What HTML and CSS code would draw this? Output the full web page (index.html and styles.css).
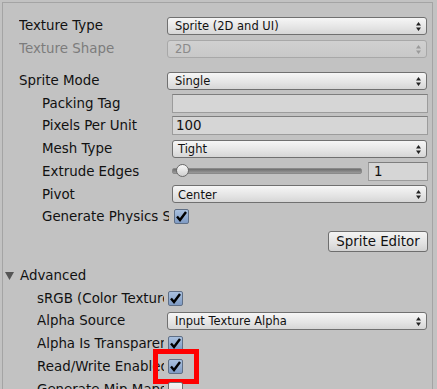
FILE: index.html
```html
<!DOCTYPE html>
<html lang="en">
<head>
    <meta charset="UTF-8">
    <title>Texture Import Settings</title>
    <link rel="stylesheet" href="styles.css">
</head>
<body>
    <div class="inspector">
        <div class="row">
            <span class="label">Texture Type</span>
            <div class="popup"><span>Sprite (2D and UI)</span><svg class="arrows" width="5" height="9" viewBox="0 0 5 9"><path d="M2.5 0 L5 3.5 L0 3.5Z M2.5 9 L5 5.5 L0 5.5Z"/></svg></div>
        </div>
        <div class="row disabled">
            <span class="label">Texture Shape</span>
            <div class="popup"><span>2D</span><svg class="arrows" width="5" height="9" viewBox="0 0 5 9"><path d="M2.5 0 L5 3.5 L0 3.5Z M2.5 9 L5 5.5 L0 5.5Z"/></svg></div>
        </div>

        <div class="row spaced">
            <span class="label">Sprite Mode</span>
            <div class="popup"><span>Single</span><svg class="arrows" width="5" height="9" viewBox="0 0 5 9"><path d="M2.5 0 L5 3.5 L0 3.5Z M2.5 9 L5 5.5 L0 5.5Z"/></svg></div>
        </div>
        <div class="row sub">
            <span class="label">Packing Tag</span>
            <div class="field"></div>
        </div>
        <div class="row sub">
            <span class="label">Pixels Per Unit</span>
            <div class="field">100</div>
        </div>
        <div class="row sub">
            <span class="label">Mesh Type</span>
            <div class="popup"><span>Tight</span><svg class="arrows" width="5" height="9" viewBox="0 0 5 9"><path d="M2.5 0 L5 3.5 L0 3.5Z M2.5 9 L5 5.5 L0 5.5Z"/></svg></div>
        </div>
        <div class="row sub">
            <span class="label">Extrude Edges</span>
            <div class="slider">
                <div class="track"><span class="thumb"></span></div>
                <div class="field number">1</div>
            </div>
        </div>
        <div class="row sub">
            <span class="label">Pivot</span>
            <div class="popup"><span>Center</span><svg class="arrows" width="5" height="9" viewBox="0 0 5 9"><path d="M2.5 0 L5 3.5 L0 3.5Z M2.5 9 L5 5.5 L0 5.5Z"/></svg></div>
        </div>
        <div class="row sub">
            <span class="label">Generate Physics Shape</span>
            <span class="toggle checked nudge"><svg width="15" height="15" viewBox="0 0 15 15"><path d="M3 7.5 L6 11 L12 3" fill="none" stroke="#000" stroke-width="2.4"/></svg></span>
        </div>

        <div class="actions">
            <button class="btn">Sprite Editor</button>
        </div>

        <div class="foldout">
            <svg width="9" height="8" viewBox="0 0 9 8"><path d="M0 0 H9 L4.5 8Z" fill="#555"/></svg>
            <span>Advanced</span>
        </div>
        <div class="row adv">
            <span class="label">sRGB (Color Texture)</span>
            <span class="toggle checked"><svg width="15" height="15" viewBox="0 0 15 15"><path d="M3 7.5 L6 11 L12 3" fill="none" stroke="#000" stroke-width="2.4"/></svg></span>
        </div>
        <div class="row adv">
            <span class="label">Alpha Source</span>
            <div class="popup"><span>Input Texture Alpha</span><svg class="arrows" width="5" height="9" viewBox="0 0 5 9"><path d="M2.5 0 L5 3.5 L0 3.5Z M2.5 9 L5 5.5 L0 5.5Z"/></svg></div>
        </div>
        <div class="row adv">
            <span class="label">Alpha Is Transparency</span>
            <span class="toggle checked"><svg width="15" height="15" viewBox="0 0 15 15"><path d="M3 7.5 L6 11 L12 3" fill="none" stroke="#000" stroke-width="2.4"/></svg></span>
        </div>
        <div class="row adv">
            <span class="label">Read/Write Enabled</span>
            <span class="toggle checked marked"><svg width="15" height="15" viewBox="0 0 15 15"><path d="M3 7.5 L6 11 L12 3" fill="none" stroke="#000" stroke-width="2.4"/></svg></span>
        </div>
        <div class="row adv">
            <span class="label">Generate Mip Maps</span>
            <span class="toggle"></span>
        </div>
    </div>
</body>
</html>
```

FILE: styles.css
```css
/* Inspector panel */
body {
    margin: 0;
    background-color: #c2c2c2;
    font-family: 'DejaVu Sans', sans-serif;
    color: #111;
    overflow: hidden;
}

.inspector {
    margin: 2px 4px 0 2px;
    border: 1px solid #a4a4a4;
    border-bottom: none;
    padding-top: 11.6px;
    height: 386px;
    overflow: hidden;
    background-color: #c2c2c2;
}

.row {
    display: flex;
    align-items: center;
    height: 22.7px;
    padding: 0 5px 0 16px;
    font-size: 13.4px;
}

.row .label {
    flex: 0 0 145px;
    margin-right: 3px;
    overflow: hidden;
    white-space: nowrap;
}

.row.spaced {
    margin-top: 9.3px;
}

.row.sub {
    padding-left: 39px;
}

.row.sub .label {
    flex-basis: 127px;
}

.row.adv {
    padding-left: 34px;
}

.row.adv .label {
    flex-basis: 127px;
}

.row.disabled {
    color: #7c7c7c;
}

/* Popup (dropdown) */
.popup {
    flex: 1;
    display: flex;
    align-items: center;
    justify-content: space-between;
    box-sizing: border-box;
    height: 18px;
    padding: 1px 5px 0 7px;
    border: 1px solid #707070;
    border-radius: 3px;
    background: linear-gradient(#f6f6f6, #e4e4e4 60%, #d6d6d6);
    font-size: 11.5px;
    color: #111;
}

.row.sub .popup {
    padding-left: 5px;
}

.arrows {
    fill: #222;
}

.row.disabled .popup {
    border-color: #a8a8a8;
    background: linear-gradient(#d0d0d0, #c8c8c8);
    color: #8a8a8a;
}

.row.disabled .arrows {
    fill: #9a9a9a;
}

/* Text fields */
.field {
    flex: 1;
    box-sizing: border-box;
    height: 19px;
    margin-right: -1px;
    padding: 0 3px;
    border: 1px solid #9c9c9c;
    border-top-color: #7e7e7e;
    background-color: #d6d6d6;
    font-size: 13.4px;
    line-height: 17px;
}

/* Slider */
.slider {
    flex: 1;
    display: flex;
    align-items: center;
    gap: 6px;
}

.track {
    position: relative;
    flex: 1;
    height: 4px;
    border-radius: 2px;
    background: linear-gradient(#6e6e6e, #9a9a9a);
    border: 1px solid #8a8a8a;
}

.thumb {
    position: absolute;
    left: 3px;
    top: -5px;
    width: 11px;
    height: 11px;
    border: 1px solid #6a6a6a;
    border-radius: 50%;
    background: linear-gradient(#f8f8f8, #d0d0d0);
}

.field.number {
    flex: 0 0 60px;
    padding-left: 5px;
}

/* Toggle */
.toggle {
    position: relative;
    box-sizing: border-box;
    width: 15px;
    height: 15px;
    margin-left: 1px;
    border: 1px solid #6c6c6c;
    border-radius: 2px;
    background: linear-gradient(#f4f4f4, #dcdcdc);
}

.toggle.checked {
    background: linear-gradient(#a9c0de, #7f9bc4);
    border-color: #5f6f86;
}

.toggle svg {
    position: absolute;
    left: -1px;
    top: -1px;
}

.toggle.nudge {
    margin-left: 2px;
}

.toggle.marked::after {
    content: "";
    position: absolute;
    left: -16px;
    top: -11px;
    width: 36px;
    height: 25px;
    border: 5px solid #ff0000;
}

/* Button row */
.actions {
    display: flex;
    justify-content: flex-end;
    padding: 2.6px 4px 0 0;
    height: 21px;
    margin-bottom: 12.6px;
}

.btn {
    box-sizing: border-box;
    height: 21px;
    width: 100px;
    padding: 0;
    border: 1px solid #6e6e6e;
    border-radius: 3px;
    background: linear-gradient(#f4f4f4, #e2e2e2 60%, #d2d2d2);
    font-family: 'DejaVu Sans', sans-serif;
    font-size: 13.4px;
    color: #111;
}

/* Foldout header */
.foldout {
    display: flex;
    align-items: center;
    gap: 6px;
    height: 22.7px;
    padding-left: 2px;
    font-size: 13.4px;
}
```
